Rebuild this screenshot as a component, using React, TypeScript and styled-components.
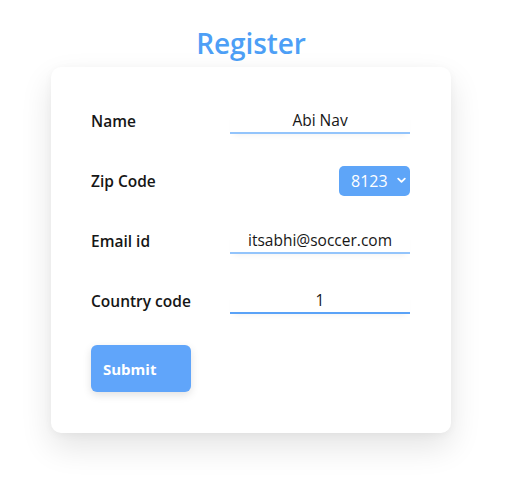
import React from "react";
import styled, { createGlobalStyle } from "styled-components";

const Global = createGlobalStyle`
  html, body { margin: 0; padding: 0; background: #ffffff; }
  body { font-family: "Open Sans", "Noto Sans", "Liberation Sans", sans-serif; color: #141414; }
  * { box-sizing: border-box; }
`;

const Page = styled.div`
  width: 502px;
  display: flex;
  flex-direction: column;
  align-items: center;
  padding: 26px 0 50px;
`;

const Title = styled.h1`
  margin: 0 0 7px;
  font-size: 28px;
  line-height: 34px;
  font-weight: 600;
  color: #4d9ff6;
  letter-spacing: -0.1px;
`;

const Card = styled.form`
  width: 400px;
  background: #fff;
  border-radius: 10px;
  box-shadow: 0 14px 32px rgba(0, 0, 0, 0.11), 0 2px 8px rgba(0, 0, 0, 0.04);
  padding: 34px 41px 41px 40px;
  display: flex;
  flex-direction: column;
  gap: 20px;
`;

const Row = styled.div`
  display: flex;
  align-items: center;
  height: 40px;
`;

const Label = styled.label`
  width: 139px;
  font-size: 15.5px;
  font-weight: 600;
  color: #161616;
`;

const TextInput = styled.input<{ $active?: boolean }>`
  width: 180px;
  height: 26px;
  border: none;
  border-bottom: 2px solid ${(p) => (p.$active ? "#5aa2f7" : "#93c4fb")};
  outline: none;
  background: transparent;
  text-align: center;
  font-family: inherit;
  font-size: 15.5px;
  color: #161616;
  padding: 0 0 1px;
  box-shadow: 0 5px 6px -4px rgba(0, 0, 0, 0.06);
`;

const SelectWrap = styled.div`
  margin-left: auto;
  position: relative;
  width: 71px;
  height: 30px;
`;

const Select = styled.select`
  appearance: none;
  width: 100%;
  height: 100%;
  border: none;
  border-radius: 5px;
  background: #5ea5f8;
  color: #fff;
  font-family: inherit;
  font-size: 16px;
  padding: 0 0 0 12px;
  outline: none;
`;

const Chevron = styled.svg`
  position: absolute;
  right: 4px;
  top: 11px;
  pointer-events: none;
`;

const Submit = styled.button`
  align-self: flex-start;
  margin-top: 4px;
  width: 100px;
  height: 47px;
  border: none;
  border-radius: 6px;
  background: #60a5fa;
  color: #fff;
  font-family: inherit;
  font-size: 15px;
  font-weight: 700;
  text-align: left;
  padding: 0 0 0 12px;
  box-shadow: 0 3px 8px rgba(0, 0, 0, 0.12);
`;

export default function App() {
  return (
    <>
      <Global />
      <Page>
        <Title>Register</Title>
        <Card onSubmit={(e) => e.preventDefault()}>
          <Row>
            <Label>Name</Label>
            <TextInput defaultValue="Abi Nav" />
          </Row>
          <Row>
            <Label>Zip Code</Label>
            <SelectWrap>
              <Select defaultValue="8123">
                <option value="8123">8123</option>
              </Select>
              <Chevron width="9" height="7" viewBox="0 0 9 7">
                <path d="M1.2 1.6 L4.5 4.8 L7.8 1.6" fill="none" stroke="#fff" strokeWidth="1.8" strokeLinecap="round" strokeLinejoin="round" />
              </Chevron>
            </SelectWrap>
          </Row>
          <Row>
            <Label>Email id</Label>
            <TextInput defaultValue="itsabhi@soccer.com" />
          </Row>
          <Row>
            <Label>Country code</Label>
            <TextInput $active defaultValue="1" />
          </Row>
          <Submit type="submit">Submit</Submit>
        </Card>
      </Page>
    </>
  );
}
